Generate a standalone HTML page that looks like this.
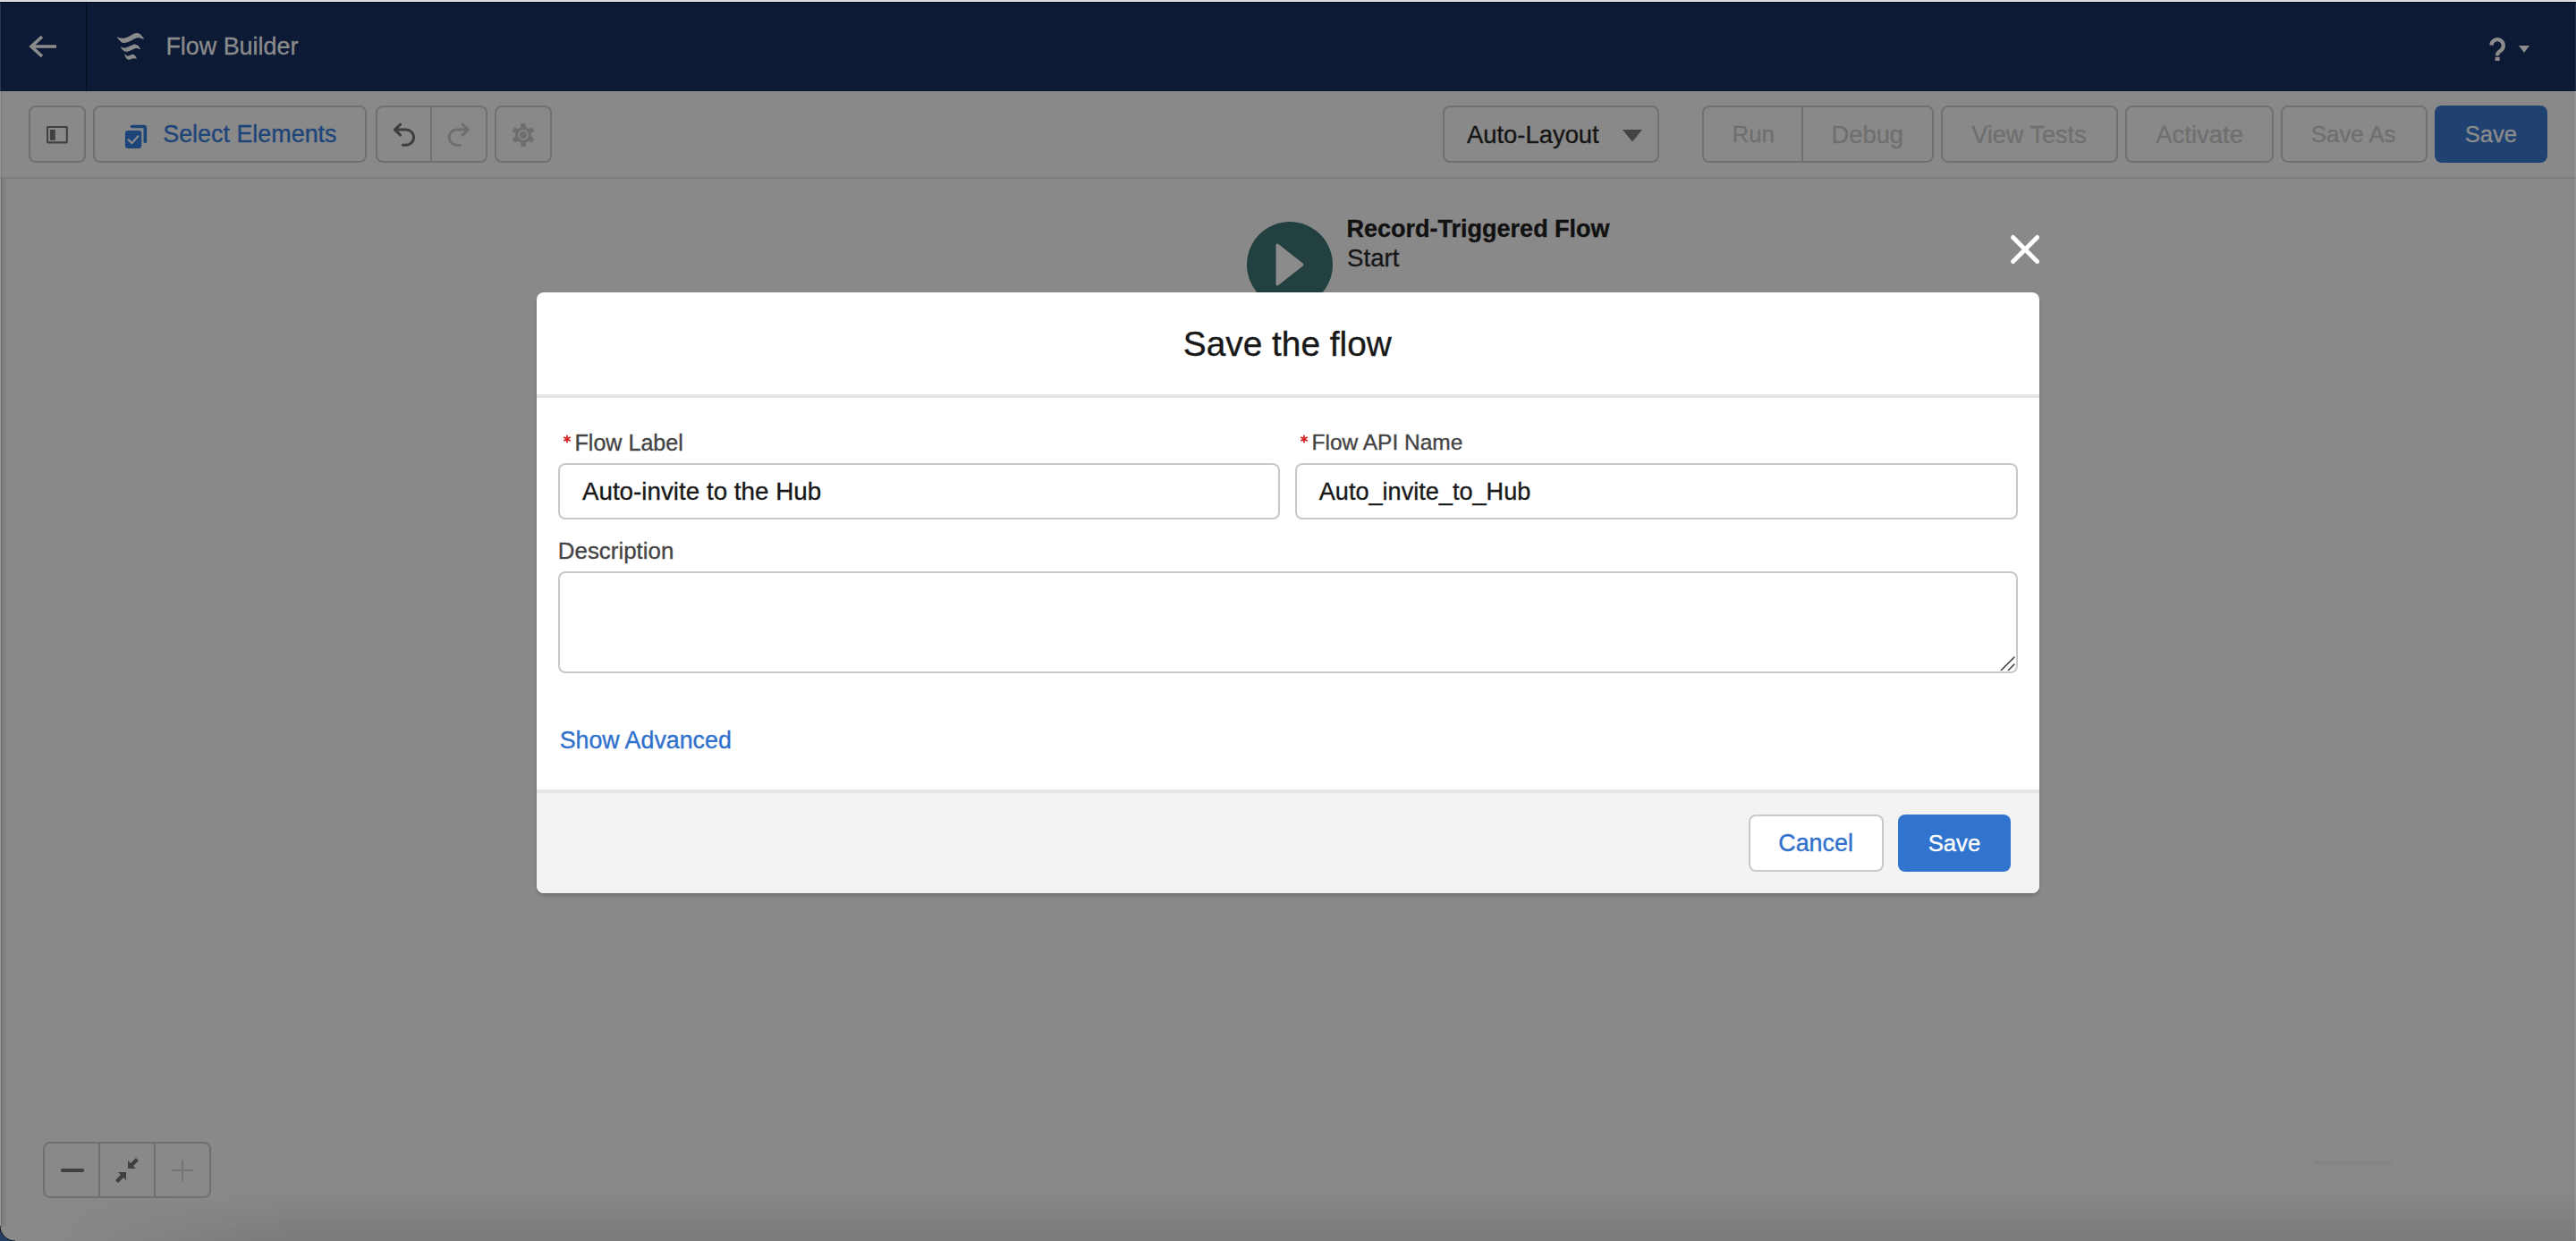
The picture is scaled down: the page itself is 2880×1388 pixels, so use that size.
<!DOCTYPE html>
<html><head><meta charset="utf-8"><style>
html,body{margin:0;padding:0;width:2880px;height:1388px;overflow:hidden;background:#898989;}
.b{position:absolute;}
.t{position:absolute;white-space:pre;font-family:"Liberation Sans",sans-serif;-webkit-text-stroke:0.35px currentColor;}
</style></head><body>
<div class="b" style="left:0px;top:0px;width:2880px;height:1px;background:#dcdde0"></div>
<div class="b" style="left:0px;top:1px;width:2880px;height:1px;background:#e9e9e9"></div>
<div class="b" style="left:0px;top:2px;width:2880px;height:1px;background:#020a1c"></div>
<div class="b" style="left:0px;top:3px;width:2880px;height:99px;background:#0c1a35"></div>
<div class="b" style="left:96px;top:3px;width:1px;height:99px;background:#070d1d"></div>
<svg class="b" style="left:30px;top:36px" width="36" height="32" viewBox="0 0 36 32"><path d="M17 5 L5 16 L17 27 M6 16 H33" fill="none" stroke="#8b8b8b" stroke-width="3.7" stroke-linejoin="miter"/></svg>
<svg class="b" style="left:120px;top:30px" width="50" height="45" viewBox="120 30 50 45"><g fill="#8b8b8b"><path d="M131.10 42.30 C131.67 43.07 133.57 45.25 134.70 46.20 C135.83 47.15 136.57 47.83 137.90 48.00 C139.23 48.17 141.08 47.72 142.70 47.20 C144.32 46.68 145.98 45.67 147.60 44.90 C149.22 44.13 151.07 43.05 152.40 42.60 C153.73 42.15 154.20 42.03 155.60 42.20 C157.00 42.37 160.27 43.90 160.80 43.60 C161.33 43.30 159.67 41.40 158.80 40.40 C157.93 39.40 156.67 38.17 155.60 37.60 C154.53 37.03 153.47 36.92 152.40 37.00 C151.33 37.08 150.55 37.48 149.20 38.10 C147.85 38.72 145.92 39.95 144.30 40.70 C142.68 41.45 141.10 42.28 139.50 42.60 C137.90 42.92 136.07 42.77 134.70 42.60 C133.33 42.43 131.90 41.65 131.30 41.60 C130.70 41.55 130.53 41.53 131.10 42.30 Z"/><path d="M135.00 53.00 C135.45 53.68 136.77 55.70 137.90 56.50 C139.03 57.30 140.45 57.80 141.80 57.80 C143.15 57.80 144.50 57.10 146.00 56.50 C147.50 55.90 149.47 54.58 150.80 54.20 C152.13 53.82 152.98 54.03 154.00 54.20 C155.02 54.37 156.78 55.68 156.90 55.20 C157.02 54.72 155.72 52.27 154.70 51.30 C153.68 50.33 151.98 49.55 150.80 49.40 C149.62 49.25 148.95 49.87 147.60 50.40 C146.25 50.93 144.05 52.07 142.70 52.60 C141.35 53.13 140.75 53.63 139.50 53.60 C138.25 53.57 135.95 52.50 135.20 52.40 C134.45 52.30 134.55 52.32 135.00 53.00 Z"/><path d="M139.20 61.00 C139.48 61.72 140.30 63.93 141.10 64.90 C141.90 65.87 142.92 66.65 144.00 66.80 C145.08 66.95 146.58 66.07 147.60 65.80 C148.62 65.53 149.25 65.25 150.10 65.20 C150.95 65.15 152.58 66.03 152.70 65.50 C152.82 64.97 151.55 62.80 150.80 62.00 C150.05 61.20 149.17 60.70 148.20 60.70 C147.23 60.70 145.97 61.68 145.00 62.00 C144.03 62.32 143.33 62.83 142.40 62.60 C141.47 62.37 139.93 60.87 139.40 60.60 C138.87 60.33 138.92 60.28 139.20 61.00 Z"/></g></svg>
<div class="t" style="left:185.45px;top:38.93px;font-size:26.9px;line-height:26.9px;color:#8b8b8b;font-weight:400;">Flow Builder</div>
<svg class="b" style="left:2770px;top:30px" width="40" height="45" viewBox="2770 30 40 45"><path d="M2785.4 50.6 A6.7 6.7 0 1 1 2796.2 56.2 Q2792 59 2792 61.5 V62.2" fill="none" stroke="#8b8b8b" stroke-width="4.3"/><rect x="2789.6" y="63.8" width="5.1" height="4.3" rx="0.8" fill="#8b8b8b"/></svg>
<svg class="b" style="left:2816px;top:51px" width="12" height="8" viewBox="0 0 12 8"><path d="M0 0 H12 L6 7.9Z" fill="#8b8b8b"/></svg>
<div class="b" style="left:0px;top:102px;width:2880px;height:96px;background:#898989"></div>
<div class="b" style="left:0px;top:198px;width:2880px;height:2px;background:#7d7d7d"></div>
<div class="b" style="left:32px;top:118px;width:64px;height:64px;border:2px solid #707070;border-radius:8px;box-sizing:border-box;"></div>
<svg class="b" style="left:52px;top:141px" width="24" height="20" viewBox="0 0 24 20"><rect x="1" y="1" width="21.8" height="17.4" rx="0.6" fill="none" stroke="#414141" stroke-width="2.1"/><rect x="3.9" y="4" width="5.9" height="11.9" fill="#414141"/></svg>
<div class="b" style="left:104px;top:118px;width:306px;height:64px;border:2px solid #707070;border-radius:8px;box-sizing:border-box;"></div>
<svg class="b" style="left:139px;top:139px" width="27" height="28" viewBox="0 0 27 28"><path d="M8.6 2.55 H21.8 Q23.3 2.55 23.3 4.05 V19.5" fill="none" stroke="#1d4479" stroke-width="3.6" stroke-linecap="round"/><rect x="0.9" y="6.9" width="18.3" height="20.1" rx="3" fill="#1d4479"/><path d="M4.6 17.2 L8.6 21.1 L15.4 13.3" fill="none" stroke="#8b8b8b" stroke-width="2.2" stroke-linecap="round" stroke-linejoin="round"/></svg>
<div class="t" style="left:182.22px;top:137.13px;font-size:26.9px;line-height:26.9px;color:#1d4479;font-weight:400;">Select Elements</div>
<div class="b" style="left:420px;top:118px;width:125px;height:64px;border:2px solid #707070;border-radius:8px;box-sizing:border-box;"></div>
<div class="b" style="left:481px;top:118px;width:2px;height:64px;background:#707070"></div>
<svg class="b" style="left:420px;top:120px" width="120" height="60" viewBox="0 0 120 60"><path d="M27.6 19.2 L21.4 25.2 L27.6 31.2 M30.3 42.3 H33.9 A8.65 8.65 0 0 0 33.9 25 H22" fill="none" stroke="#3e3e3e" stroke-width="3" stroke-linecap="round" stroke-linejoin="round"/><path d="M97.1 19.2 L103.3 25.2 L97.1 31.2 M94.4 42.3 H90.8 A8.65 8.65 0 0 1 90.8 25 H102.7" fill="none" stroke="#6f6f6f" stroke-width="3" stroke-linecap="round" stroke-linejoin="round"/></svg>
<div class="b" style="left:553px;top:118px;width:64px;height:64px;border:2px solid #707070;border-radius:8px;box-sizing:border-box;"></div>
<svg class="b" style="left:572px;top:137px" width="26" height="28" viewBox="0 0 26 28"><g fill="#6f6f6f"><circle cx="13" cy="14" r="9"/><rect x="10" y="1" width="6" height="26" rx="2"/><rect x="10" y="1" width="6" height="26" rx="2" transform="rotate(60 13 14)"/><rect x="10" y="1" width="6" height="26" rx="2" transform="rotate(-60 13 14)"/></g><circle cx="13" cy="14" r="4.9" fill="none" stroke="#8b8b8b" stroke-width="1.5"/></svg>
<div class="b" style="left:1613px;top:118px;width:242px;height:64px;border:2px solid #707070;border-radius:8px;box-sizing:border-box;"></div>
<div class="t" style="left:1640.00px;top:136.71px;font-size:27.4px;line-height:27.4px;color:#151515;font-weight:400;">Auto-Layout</div>
<svg class="b" style="left:1814px;top:145px" width="22" height="14" viewBox="0 0 22 14"><path d="M0 0 H22 L11 13.5Z" fill="#444"/></svg>
<div class="b" style="left:1903px;top:118px;width:259px;height:64px;border:2px solid #707070;border-radius:8px;box-sizing:border-box;"></div>
<div class="b" style="left:2014px;top:118px;width:2px;height:64px;background:#707070"></div>
<div class="t" style="left:1936.53px;top:138.08px;font-size:25.9px;line-height:25.9px;color:#6f6f6f;font-weight:400;">Run</div>
<div class="t" style="left:2047.62px;top:136.89px;font-size:27.3px;line-height:27.3px;color:#6f6f6f;font-weight:400;">Debug</div>
<div class="b" style="left:2170px;top:118px;width:198px;height:64px;border:2px solid #707070;border-radius:8px;box-sizing:border-box;"></div>
<div class="t" style="left:2204.20px;top:137.06px;font-size:27.1px;line-height:27.1px;color:#6f6f6f;font-weight:400;">View Tests</div>
<div class="b" style="left:2376px;top:118px;width:166px;height:64px;border:2px solid #707070;border-radius:8px;box-sizing:border-box;"></div>
<div class="t" style="left:2410.20px;top:136.72px;font-size:27.5px;line-height:27.5px;color:#6f6f6f;font-weight:400;">Activate</div>
<div class="b" style="left:2550px;top:118px;width:164px;height:64px;border:2px solid #707070;border-radius:8px;box-sizing:border-box;"></div>
<div class="t" style="left:2583.87px;top:138.16px;font-size:25.8px;line-height:25.8px;color:#6f6f6f;font-weight:400;">Save As</div>
<div class="b" style="left:2722px;top:118px;width:126px;height:64px;background:#1f4272;border-radius:8px"></div>
<div class="t" style="left:2755.68px;top:138.33px;font-size:25.6px;line-height:25.6px;color:#8b8b8b;font-weight:400;">Save</div>
<div class="b" style="left:0px;top:200px;width:2880px;height:1188px;background:#898989"></div>
<div class="b" style="left:0px;top:1335px;width:2880px;height:53px;background:linear-gradient(to bottom, rgba(0,0,0,0), rgba(0,0,0,0.10));-webkit-mask-image:linear-gradient(to right, transparent 60px, black 320px)"></div>
<div class="b" style="left:1394px;top:248px;width:96px;height:96px;background:#21403f;border-radius:50%"></div>
<svg class="b" style="left:1425px;top:271px" width="34" height="50" viewBox="0 0 34 50"><path d="M3 3 L31 25 L3 47Z" fill="#8b8b8b" stroke="#8b8b8b" stroke-width="3" stroke-linejoin="round"/></svg>
<div class="t" style="left:1505.58px;top:243.44px;font-size:27.0px;line-height:27.0px;color:#111111;font-weight:700;">Record-Triggered Flow</div>
<div class="t" style="left:1506.10px;top:274.54px;font-size:27.6px;line-height:27.6px;color:#161616;font-weight:400;">Start</div>
<svg class="b" style="left:2240px;top:255px" width="50" height="50" viewBox="2240 255 50 50"><path d="M2250.6 265.4 L2277.6 292.4 M2277.6 265.4 L2250.6 292.4" fill="none" stroke="#ffffff" stroke-width="5" stroke-linecap="round"/></svg>
<div class="b" style="left:48px;top:1277px;width:188px;height:63px;border:2px solid #707070;border-radius:8px;box-sizing:border-box"></div>
<div class="b" style="left:110px;top:1277px;width:2px;height:63px;background:#707070"></div>
<div class="b" style="left:172px;top:1277px;width:2px;height:63px;background:#707070"></div>
<div class="b" style="left:68px;top:1307.3px;width:26px;height:3.400000000000091px;background:#404040;border-radius:1.7px"></div>
<svg class="b" style="left:128px;top:1295px" width="28" height="28" viewBox="0 0 28 28"><g fill="#404040"><path d="M15 12 V3 L18 6 L24 0 L27 3 L21 9 L24 12Z"/><path d="M13 16 V25 L10 22 L4 28 L1 25 L7 19 L4 16Z"/></g></svg>
<div class="b" style="left:202.8px;top:1297px;width:2.3999999999999773px;height:24px;background:#747474"></div>
<div class="b" style="left:192px;top:1307.8px;width:24px;height:2.400000000000091px;background:#747474"></div>
<div class="b" style="left:600px;top:327px;width:1680px;height:672px;background:#ffffff;border-radius:8px;box-shadow:0 4px 4px -1px rgba(0,0,0,0.18), 0 0 1.5px rgba(0,0,0,0.15)"></div>
<div class="b" style="left:600px;top:883px;width:1680px;height:116px;background:#f3f3f3;border-radius:0 0 8px 8px"></div>
<div class="b" style="left:600px;top:441px;width:1680px;height:4px;background:#e5e5e5"></div>
<div class="b" style="left:600px;top:883px;width:1680px;height:4px;background:#e5e5e5"></div>
<div class="t" style="left:1322.85px;top:366.06px;font-size:38.8px;line-height:38.8px;color:#181818;font-weight:400;">Save the flow</div>
<svg class="b" style="left:627.6px;top:485.2px" width="12" height="12" viewBox="-6 -6 12 12"><path d="M-0.00 -3.60 L0.00 3.60 M-3.12 -1.80 L3.12 1.80 M-3.12 1.80 L3.12 -1.80 " stroke="#d62628" stroke-width="1.8" stroke-linecap="round"/></svg>
<div class="t" style="left:642.49px;top:482.65px;font-size:25.1px;line-height:25.1px;color:#444444;font-weight:400;">Flow Label</div>
<div class="b" style="left:624px;top:518px;width:807px;height:63px;border:2px solid #c9c9c9;border-radius:8px;box-sizing:border-box;background:#fff"></div>
<div class="t" style="left:650.90px;top:535.57px;font-size:27.8px;line-height:27.8px;color:#181818;font-weight:400;">Auto-invite to the Hub</div>
<svg class="b" style="left:1451.7px;top:485.2px" width="12" height="12" viewBox="-6 -6 12 12"><path d="M-0.00 -3.60 L0.00 3.60 M-3.12 -1.80 L3.12 1.80 M-3.12 1.80 L3.12 -1.80 " stroke="#d62628" stroke-width="1.8" stroke-linecap="round"/></svg>
<div class="t" style="left:1466.54px;top:483.16px;font-size:24.5px;line-height:24.5px;color:#444444;font-weight:400;">Flow API Name</div>
<div class="b" style="left:1448px;top:518px;width:808px;height:63px;border:2px solid #c9c9c9;border-radius:8px;box-sizing:border-box;background:#fff"></div>
<div class="t" style="left:1474.80px;top:536.16px;font-size:27.1px;line-height:27.1px;color:#181818;font-weight:400;">Auto_invite_to_Hub</div>
<div class="t" style="left:623.83px;top:604.08px;font-size:25.9px;line-height:25.9px;color:#444444;font-weight:400;">Description</div>
<div class="b" style="left:624px;top:639px;width:1632px;height:114px;border:2px solid #c9c9c9;border-radius:8px;box-sizing:border-box;background:#fff"></div>
<svg class="b" style="left:2236px;top:733px" width="18" height="18" viewBox="0 0 18 18"><path d="M1.5 16.5 L16 2 M9.5 16.5 L16 10" stroke="#444" stroke-width="1.6" stroke-linecap="round"/></svg>
<div class="t" style="left:625.63px;top:814.81px;font-size:26.8px;line-height:26.8px;color:#2f70cb;font-weight:400;">Show Advanced</div>
<div class="b" style="left:1955px;top:911px;width:151px;height:64px;border:2px solid #c9c9c9;border-radius:8px;box-sizing:border-box;background:#fff"></div>
<div class="t" style="left:1988.25px;top:930.43px;font-size:26.9px;line-height:26.9px;color:#2f70cb;font-weight:400;">Cancel</div>
<div class="b" style="left:2122px;top:911px;width:126px;height:64px;background:#3074cd;border-radius:8px"></div>
<div class="t" style="left:2155.67px;top:931.44px;font-size:25.7px;line-height:25.7px;color:#ffffff;font-weight:400;">Save</div>
<div class="b" style="left:0px;top:3px;width:1px;height:1368px;background:rgba(255,255,255,0.13)"></div>
<div class="b" style="left:1px;top:3px;width:1px;height:1369px;background:rgba(0,0,0,0.10)"></div>
<div class="b" style="left:1px;top:200px;width:8px;height:1172px;background:linear-gradient(to right, rgba(0,0,0,0.12), rgba(0,0,0,0))"></div>
<div class="b" style="left:2879px;top:3px;width:1px;height:1385px;background:rgba(255,255,255,0.10)"></div>
<div class="b" style="left:2588px;top:1299px;width:86px;height:3px;background:rgba(0,0,0,0.06);filter:blur(0.8px)"></div>
<svg class="b" style="left:0;top:1370px" width="20" height="18" viewBox="0 0 20 18"><path d="M0 1 A17 17 0 0 0 17 18 H0Z" fill="#223e63"/><path d="M0 1 A17 17 0 0 0 17 18" fill="none" stroke="#0a0f18" stroke-width="1"/></svg>
</body></html>
